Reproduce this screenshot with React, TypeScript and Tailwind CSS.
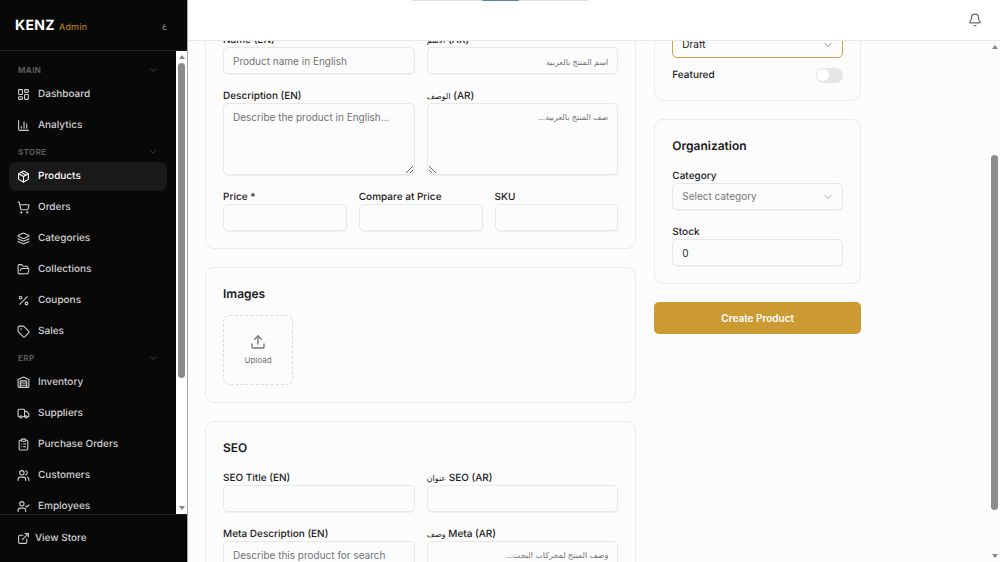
import React from "react";
import {
  Bell,
  ChartColumn,
  ChevronDown,
  ClipboardList,
  ExternalLink,
  FolderOpen,
  Layers,
  LayoutDashboard,
  Package,
  Percent,
  ShoppingCart,
  Tag,
  Truck,
  Upload,
  UserCheck,
  Users,
  Warehouse,
} from "lucide-react";

const sections = [
  {
    title: "MAIN",
    items: [
      { label: "Dashboard", icon: LayoutDashboard },
      { label: "Analytics", icon: ChartColumn },
    ],
  },
  {
    title: "STORE",
    items: [
      { label: "Products", icon: Package, active: true },
      { label: "Orders", icon: ShoppingCart },
      { label: "Categories", icon: Layers },
      { label: "Collections", icon: FolderOpen },
      { label: "Coupons", icon: Percent },
      { label: "Sales", icon: Tag },
    ],
  },
  {
    title: "ERP",
    items: [
      { label: "Inventory", icon: Warehouse },
      { label: "Suppliers", icon: Truck },
      { label: "Purchase Orders", icon: ClipboardList },
      { label: "Customers", icon: Users },
      { label: "Employees", icon: UserCheck },
    ],
  },
];

const boxClass =
  "block w-full rounded-[5px] border border-[#e8e8e8] bg-transparent px-[9px] text-[10px] text-[#1a1a1a] shadow-2xs outline-none placeholder:text-[#737373] rtl:placeholder:text-[8px]";

const ScrollArrow = ({ down = false }: { down?: boolean }) => (
  <svg viewBox="0 0 6 4" className="h-1 w-1.5 shrink-0" fill="#858585">
    <path d={down ? "M0 0h6L3 4z" : "M0 4h6L3 0z"} />
  </svg>
);

const Arabic = ({ children }: { children: React.ReactNode }) => (
  <span lang="ar" className="text-[8px]">
    {children}
  </span>
);

const Card = ({
  title,
  children,
}: {
  title?: string;
  children: React.ReactNode;
}) => (
  <section className="rounded-[9px] border border-[#ebebeb] p-[17px]">
    {title && (
      <h2 className="mb-3 text-[12px] leading-[18px] font-semibold">{title}</h2>
    )}
    {children}
  </section>
);

const Field = ({
  id,
  label,
  children,
}: {
  id: string;
  label: React.ReactNode;
  children: React.ReactNode;
}) => (
  <div>
    <label
      htmlFor={id}
      className="block h-4 text-[10px] leading-[18px] font-medium"
    >
      {label}
    </label>
    {children}
  </div>
);

const Input = ({ id, label, ...props }: any) => (
  <Field id={id} label={label}>
    <input id={id} className={`${boxClass} h-[27px]`} {...props} />
  </Field>
);

const Textarea = ({ id, label, ...props }: any) => (
  <Field id={id} label={label}>
    <textarea
      id={id}
      className={`${boxClass} h-[72px] resize py-[5px] leading-4`}
      {...props}
    />
  </Field>
);

const Sidebar = () => {
  return (
    <aside className="flex w-[188px] shrink-0 flex-col border-r border-[#a8a8a8] bg-[#080808]">
      <div className="flex h-[51px] shrink-0 items-center justify-between border-b border-[#1f1f1f] pr-5 pl-[15px]">
        <div className="flex items-baseline gap-1">
          <span className="text-[14px] font-bold tracking-wide text-white">
            KENZ
          </span>
          <span className="text-[9px] tracking-wide text-[#c98a26]">Admin</span>
        </div>
        <button className="text-[8px] text-[#a0a0a0]">ع</button>
      </div>

      <div className="flex min-h-0 flex-1">
        <nav className="flex flex-1 flex-col gap-0.5 overflow-hidden px-[9px] pt-[9px]">
          {sections.map((section) => (
            <div key={section.title}>
              <button className="flex h-[19px] w-full items-center justify-between px-[9px] text-[#5c5c5c]">
                <span className="text-[8px] font-bold tracking-wider">
                  {section.title}
                </span>
                <ChevronDown size={10} className="text-[#444444]" />
              </button>
              <div className="flex flex-col gap-0.5 pt-px">
                {section.items.map(({ label, icon: Icon, active }: any) => (
                  <a
                    key={label}
                    href="#"
                    className={`flex h-[29px] items-center gap-2 rounded-[7px] px-2 text-[10px] font-medium ${
                      active ? "bg-[#191919] text-white" : "text-[#d0d0d0]"
                    }`}
                  >
                    <Icon size={13} />
                    {label}
                  </a>
                ))}
              </div>
            </div>
          ))}
        </nav>
        <div className="flex w-[11px] flex-col items-center bg-white py-1">
          <ScrollArrow />
          <div className="mt-1 h-[315px] w-[7px] rounded-full bg-[#8b8b8b]" />
          <div className="flex-1" />
          <ScrollArrow down />
        </div>
      </div>

      <div className="h-12 shrink-0 border-t border-[#1f1f1f] px-[17px]">
        <a
          href="#"
          className="flex h-full items-center gap-[5px] text-[10px] font-medium text-[#d0d0d0]"
        >
          <ExternalLink size={13} />
          View Store
        </a>
      </div>
    </aside>
  );
};

const ProductForm = () => {
  return (
    <form className="-mt-[28px] grid max-w-[656px] grid-cols-3 items-start gap-[18px]">
      <div className="col-span-2 flex flex-col gap-[18px]">
        <Card>
          <div className="grid grid-cols-2 gap-x-3 gap-y-[13px]">
            <Input
              id="name-en"
              label="Name (EN)"
              placeholder="Product name in English"
            />
            <Input
              id="name-ar"
              label={
                <>
                  <Arabic>الاسم</Arabic> (AR)
                </>
              }
              dir="rtl"
              placeholder="اسم المنتج بالعربية"
            />
            <Textarea
              id="desc-en"
              label="Description (EN)"
              placeholder="Describe the product in English..."
            />
            <Textarea
              id="desc-ar"
              label={
                <>
                  <Arabic>الوصف</Arabic> (AR)
                </>
              }
              dir="rtl"
              placeholder="صف المنتج بالعربية..."
            />
          </div>
          <div className="mt-[13px] grid grid-cols-3 gap-3">
            <Input id="price" label="Price *" />
            <Input id="compare-price" label="Compare at Price" />
            <Input id="sku" label="SKU" />
          </div>
        </Card>

        <Card title="Images">
          <button
            type="button"
            className="flex size-[70px] flex-col items-center justify-center gap-1 rounded-[7px] border border-dashed border-[#dcdcdc] text-[#737373]"
          >
            <Upload size={16} strokeWidth={2} />
            <span className="text-[8px] leading-3">Upload</span>
          </button>
        </Card>

        <Card title="SEO">
          <div className="grid grid-cols-2 gap-x-3 gap-y-[13px]">
            <Input id="seo-en" label="SEO Title (EN)" />
            <Input
              id="seo-ar"
              label={
                <>
                  <Arabic>عنوان</Arabic> SEO (AR)
                </>
              }
              dir="rtl"
            />
            <Textarea
              id="meta-en"
              label="Meta Description (EN)"
              placeholder="Describe this product for search"
            />
            <Textarea
              id="meta-ar"
              label={
                <>
                  <Arabic>وصف</Arabic> Meta (AR)
                </>
              }
              dir="rtl"
              placeholder="وصف المنتج لمحركات البحث..."
            />
          </div>
        </Card>
      </div>

      <div className="flex flex-col gap-[18px]">
        <Card>
          <div className="relative">
            <select
              aria-label="Status"
              className="block h-[27px] w-full appearance-none rounded-[5px] border border-[#d3a04c] px-[9px] text-[10px] outline-none"
            >
              <option>Draft</option>
            </select>
            <ChevronDown
              size={12}
              className="pointer-events-none absolute top-2 right-[9px] text-[#8a8a8a]"
            />
          </div>
          <div className="mt-[9px] flex h-4 items-center justify-between">
            <label
              htmlFor="featured"
              className="text-[10px] leading-[18px] font-medium"
            >
              Featured
            </label>
            <input
              id="featured"
              type="checkbox"
              role="switch"
              className="flex h-[15px] w-[27px] appearance-none items-center rounded-full bg-[#e6e6e6] p-px before:size-3 before:rounded-full before:bg-white"
            />
          </div>
        </Card>

        <Card title="Organization">
          <div className="flex flex-col gap-[13px]">
            <Field id="category" label="Category">
              <div className="relative">
                <select
                  id="category"
                  className={`${boxClass} h-[27px] appearance-none text-[#777777]`}
                >
                  <option>Select category</option>
                </select>
                <ChevronDown
                  size={12}
                  className="pointer-events-none absolute top-2 right-[9px] text-[#a3a3a3]"
                />
              </div>
            </Field>
            <Input id="stock" label="Stock" defaultValue="0" />
          </div>
        </Card>

        <button
          type="submit"
          className="h-8 rounded-[5px] bg-[#cb9a32] text-[10px] font-semibold text-white"
        >
          Create Product
        </button>
      </div>
    </form>
  );
};

const App = () => {
  return (
    <div className="relative flex h-screen overflow-hidden bg-[#fcfcfc] font-['Inter','Liberation_Sans','DejaVu_Sans',sans-serif] text-[#1a1a1a] [text-rendering:geometricPrecision]">
      <Sidebar />
      <div className="flex min-w-0 flex-1 flex-col">
        <header className="flex h-[41px] shrink-0 items-center justify-end border-b border-[#e8e8e8] bg-white px-[18px]">
          <button aria-label="Notifications">
            <Bell size={14} className="text-[#666666]" />
          </button>
        </header>
        <div className="flex min-h-0 flex-1">
          <main className="min-w-0 flex-1 overflow-hidden px-[17px]">
            <ProductForm />
          </main>
          <div className="flex w-[11px] flex-col items-center py-1">
            <ScrollArrow />
            <div className="min-h-0 flex-[106]" />
            <div className="min-h-0 w-[7px] flex-[354] rounded-full bg-[#8b8b8b]" />
            <div className="min-h-0 flex-[44]" />
            <ScrollArrow down />
          </div>
        </div>
      </div>
      <div className="absolute top-0 left-1/2 flex h-px w-[177px] -translate-x-1/2 justify-center bg-[#dedede]">
        <div className="h-px w-9 bg-[#4a87b5]" />
      </div>
    </div>
  );
};

export default App;
